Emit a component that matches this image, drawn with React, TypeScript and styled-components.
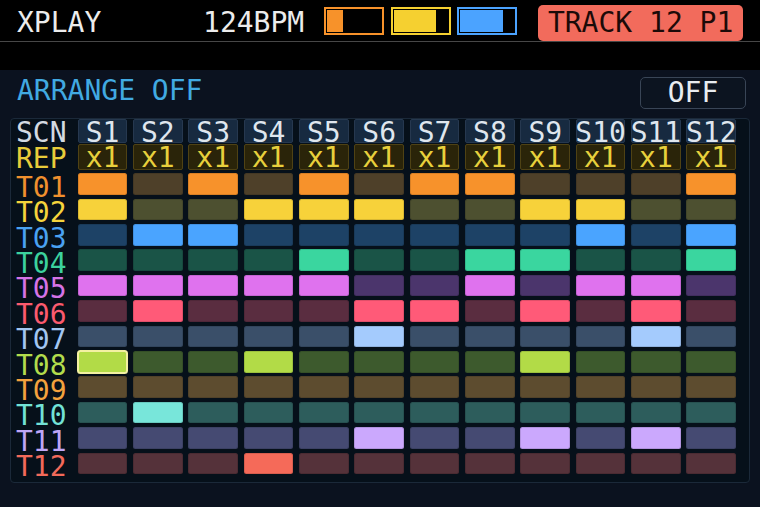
import React from "react";
import styled, { createGlobalStyle } from "styled-components";

const GlobalStyle = createGlobalStyle`
  html, body {
    margin: 0;
    padding: 0;
    background: #000;
  }
  body {
    width: 760px;
    height: 507px;
    overflow: hidden;
    font-family: "DejaVu Sans Mono", "Liberation Mono", monospace;
  }
`;

const Screen = styled.div`
  width: 760px;
  height: 507px;
  display: flex;
  flex-direction: column;
  background: #0b121f;
  color: #e6ebf0;
  font-size: 28px;
`;

const Header = styled.header`
  flex: none;
  height: 70px;
  background: #000;
`;

const TopBar = styled.div`
  display: flex;
  align-items: flex-start;
  height: 41px;
  padding: 0 16.7px 0 17px;
  border-bottom: 1px solid #474747;
`;

const Brand = styled.div`
  flex: 1;
  padding-top: 9px;
  line-height: 28.6px;
  color: #ececec;
  white-space: nowrap;
`;

const Tempo = styled.div`
  padding-top: 9px;
  line-height: 28.6px;
  color: #ececec;
  margin-right: 20px;
  white-space: nowrap;
`;

const Swatches = styled.div`
  display: flex;
  gap: 6.5px;
  margin-top: 7.3px;
  margin-right: 20.7px;
`;

const Swatch = styled.div<{ $color: string }>`
  box-sizing: border-box;
  width: 60px;
  height: 27.4px;
  padding: 1px;
  border: 2px solid ${(p) => p.$color};
  background: #000;
`;

const SwatchFill = styled.div<{ $color: string }>`
  height: 100%;
  background: ${(p) => p.$color};
`;

const TrackBadge = styled.div`
  margin-top: 5px;
  height: 35.5px;
  padding: 0 10px;
  border-radius: 5px;
  background: #f26b5c;
  color: #1c0a08;
  line-height: 35.5px;
  white-space: nowrap;
`;

const Main = styled.main`
  flex: 1;
  display: flex;
  flex-direction: column;
  padding: 7px 10px 0;
`;

const ArrangeRow = styled.div`
  display: flex;
  justify-content: space-between;
  align-items: flex-start;
  padding: 0 4px 0 7px;
`;

const ArrangeLabel = styled.div`
  line-height: 28.6px;
  color: #41aae2;
  white-space: nowrap;
`;

const ToggleButton = styled.div`
  box-sizing: border-box;
  width: 106px;
  height: 32px;
  border: 1px solid #394556;
  border-radius: 5px;
  background: #0c1420;
  color: #e8ecf0;
  text-align: center;
  line-height: 30px;
`;

const Panel = styled.section`
  margin-top: 8.7px;
  display: flex;
  flex-direction: column;
  padding: 0 12.7px 8.2px 0;
  border: 1px solid #1b2939;
  border-radius: 4px;
  background: #06101a;
`;

const Row = styled.div<{ $height: number; $after: number }>`
  display: grid;
  grid-template-columns: 61px repeat(12, 49.7px);
  grid-template-rows: ${(p) => p.$height}px;
  column-gap: 5.66px;
  height: ${(p) => p.$height}px;
  margin-bottom: ${(p) => p.$after}px;
`;

const Rows = styled.div`
  display: flex;
  flex-direction: column;
  gap: 3.8px;
`;

/* labels sit a little low in their row, like the device's screen font */
const RowLabel = styled.div<{ $color: string; $drop?: number }>`
  padding: ${(p) => p.$drop ?? 3.5}px 0 0 5px;
  line-height: 21.6px;
  color: ${(p) => p.$color};
  white-space: nowrap;
`;

const SceneCell = styled.div`
  box-sizing: border-box;
  display: flex;
  justify-content: center;
  padding-top: 3.3px;
  border: 1px solid #26384f;
  border-radius: 2px;
  background: #172a40;
  color: #dfe6ee;
  line-height: 20px;
  white-space: nowrap;
`;

const RepeatCell = styled.div`
  box-sizing: border-box;
  display: flex;
  justify-content: center;
  padding-top: 3.3px;
  border: 1px solid #4f4214;
  border-radius: 2px;
  background: #2a2409;
  color: #e8d03c;
  line-height: 20px;
  white-space: nowrap;
`;

const ClipCell = styled.div<{ $bg: string; $selected?: boolean }>`
  border-radius: 2.5px;
  background: ${(p) => p.$bg};
  box-shadow: inset 0 0 0 1px rgba(0, 0, 0, 0.12);
  outline: ${(p) => (p.$selected ? "2px solid #f3f0a2" : "none")};
  outline-offset: -1px;
`;

type Track = {
  id: string;
  label: string;
  on: string;
  off: string;
  steps: string;
};

const tracks: Track[] = [
  { id: "T01", label: "#f0902e", on: "#f7922b", off: "#4e4029", steps: "101010110001" },
  { id: "T02", label: "#f5d43c", on: "#f7d23a", off: "#4d5030", steps: "100111001100" },
  { id: "T03", label: "#4aa2f2", on: "#4aa4ff", off: "#1d4266", steps: "011000000101" },
  { id: "T04", label: "#3cd29e", on: "#3ad69f", off: "#1a5447", steps: "000010011001" },
  { id: "T05", label: "#d573e6", on: "#df72ee", off: "#4b356c", steps: "111110010110" },
  { id: "T06", label: "#fb5a6e", on: "#ff5a78", off: "#5a2d40", steps: "010001101010" },
  { id: "T07", label: "#a2c6f2", on: "#a4cbfd", off: "#3a4f69", steps: "000001000010" },
  { id: "T08", label: "#b2dc4c", on: "#b2db47", off: "#3d5a2d", steps: "100100001000" },
  { id: "T09", label: "#f3a23e", on: "#f3a23e", off: "#5d4c2f", steps: "000000000000" },
  { id: "T10", label: "#72e2d6", on: "#78e6da", off: "#2d5d5c", steps: "010000000000" },
  { id: "T11", label: "#bea6f6", on: "#cba8fd", off: "#454a72", steps: "000001001010" },
  { id: "T12", label: "#f26a5a", on: "#f56a59", off: "#55323a", steps: "000100000000" },
];

const scenes = Array.from({ length: 12 }, (_, i) => `S${i + 1}`);

const meters = [
  { color: "#f7922a", level: 30 },
  { color: "#f5d030", level: 79 },
  { color: "#4ba3ff", level: 80 },
];

const selected = { track: "T08", scene: 0 };

export default function App() {
  return (
    <>
      <GlobalStyle />
      <Screen>
        <Header>
          <TopBar>
            <Brand>XPLAY</Brand>
            <Tempo>124BPM</Tempo>
            <Swatches>
              {meters.map((m) => (
                <Swatch key={m.color} $color={m.color}>
                  <SwatchFill $color={m.color} style={{ width: `${m.level}%` }} />
                </Swatch>
              ))}
            </Swatches>
            <TrackBadge>TRACK 12 P1</TrackBadge>
          </TopBar>
        </Header>
        <Main>
          <ArrangeRow>
            <ArrangeLabel>ARRANGE OFF</ArrangeLabel>
            <ToggleButton>OFF</ToggleButton>
          </ArrangeRow>
          <Panel>
            <Row $height={24} $after={1.5}>
              <RowLabel $color="#d3dae2" $drop={3.3}>SCN</RowLabel>
              {scenes.map((s) => (
                <SceneCell key={s}>{s}</SceneCell>
              ))}
            </Row>
            <Row $height={26} $after={3.1}>
              <RowLabel $color="#e8cc3a">REP</RowLabel>
              {scenes.map((s) => (
                <RepeatCell key={s}>x1</RepeatCell>
              ))}
            </Row>
            <Rows>
              {tracks.map((t) => (
                <Row key={t.id} $height={21.6} $after={0}>
                  <RowLabel $color={t.label}>{t.id}</RowLabel>
                  {t.steps.split("").map((v, i) => (
                    <ClipCell
                      key={i}
                      $bg={v === "1" ? t.on : t.off}
                      $selected={t.id === selected.track && i === selected.scene}
                    />
                  ))}
                </Row>
              ))}
            </Rows>
          </Panel>
        </Main>
      </Screen>
    </>
  );
}
